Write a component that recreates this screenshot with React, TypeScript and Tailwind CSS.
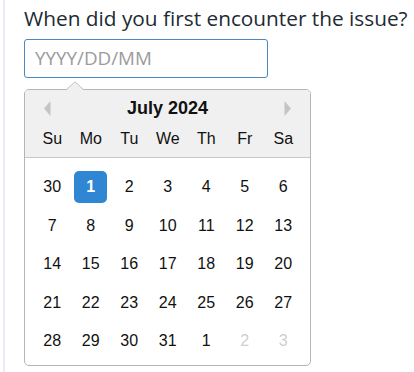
import React from "react";

const weeks: { d: number; muted?: boolean; sel?: boolean }[][] = [
  [{ d: 30 }, { d: 1, sel: true }, { d: 2 }, { d: 3 }, { d: 4 }, { d: 5 }, { d: 6 }],
  [{ d: 7 }, { d: 8 }, { d: 9 }, { d: 10 }, { d: 11 }, { d: 12 }, { d: 13 }],
  [{ d: 14 }, { d: 15 }, { d: 16 }, { d: 17 }, { d: 18 }, { d: 19 }, { d: 20 }],
  [{ d: 21 }, { d: 22 }, { d: 23 }, { d: 24 }, { d: 25 }, { d: 26 }, { d: 27 }],
  [{ d: 28 }, { d: 29 }, { d: 30 }, { d: 31 }, { d: 1 }, { d: 2, muted: true }, { d: 3, muted: true }],
];

const days = ["Su", "Mo", "Tu", "We", "Th", "Fr", "Sa"];

export default function App() {
  return (
    <div className="w-[414px] h-[372px] bg-white overflow-hidden">
      <div className="ml-[3px] h-full border-l-2 border-[#e9edf3] pl-[19px]">
        <div className="pt-[4px] text-[20.8px] leading-[28px] text-[#222a33] font-['Open_Sans',sans-serif] whitespace-nowrap">
          When did you first encounter the issue?
        </div>
        <div className="mt-[7px] w-[244px] h-[39px] border border-[#4d87c2] rounded-[3px] flex items-center pl-[10px] text-[18.8px] text-[#9b9b9b] font-['Open_Sans',sans-serif]">
          YYYY/DD/MM
        </div>
        <div className="relative mt-[11px] w-[287px] font-['Liberation_Sans',Arial,sans-serif]">
          <svg className="absolute left-[42px] top-[-8px]" width="18" height="10" viewBox="0 0 18 10">
            <path d="M0 9.5 L9 0.8 L18 9.5 Z" fill="#f0f0f0" />
            <polyline points="0,9 9,0.8 18,9" fill="none" stroke="#bdbdbd" strokeWidth="1" />
          </svg>
          <div className="h-[277px] border border-[#b5b5b5] rounded-[5px] overflow-hidden bg-white">
            <div className="bg-[#f0f0f0] border-b border-[#c8c8c8] pl-[8px] pb-[6px]">
              <div className="h-[37px] relative flex items-center justify-center text-[18px] font-bold text-[#111]">
                <svg className="absolute left-[11px] top-[11px]" width="7" height="15" viewBox="0 0 7 15">
                  <path d="M6.5 0 L0 7.5 L6.5 15 Z" fill="#c4c4c4" />
                </svg>
                <span className="mr-[8px]">July 2024</span>
                <svg className="absolute right-[19px] top-[11px]" width="7" height="15" viewBox="0 0 7 15">
                  <path d="M0.5 0 L7 7.5 L0.5 15 Z" fill="#c4c4c4" />
                </svg>
              </div>
              <div className="grid grid-cols-[repeat(7,38.5px)] h-[24px] items-center text-[16px] text-[#111]">
                {days.map((d) => (
                  <div key={d} className="text-center">
                    {d}
                  </div>
                ))}
              </div>
            </div>
            <div className="pl-[8px] pt-[10px]">
              {weeks.map((w, i) => (
                <div key={i} className="grid grid-cols-[repeat(7,38.5px)] h-[38.5px] items-center text-[16px]">
                  {w.map((c, j) => (
                    <div key={j} className="flex justify-center">
                      {c.sel ? (
                        <div className="w-[33px] h-[32px] rounded-[5px] bg-[#2f86d2] text-white font-bold flex items-center justify-center">
                          {c.d}
                        </div>
                      ) : (
                        <div className={c.muted ? "text-[#cfcfcf]" : "text-[#111]"}>{c.d}</div>
                      )}
                    </div>
                  ))}
                </div>
              ))}
            </div>
          </div>
        </div>
      </div>
    </div>
  );
}
